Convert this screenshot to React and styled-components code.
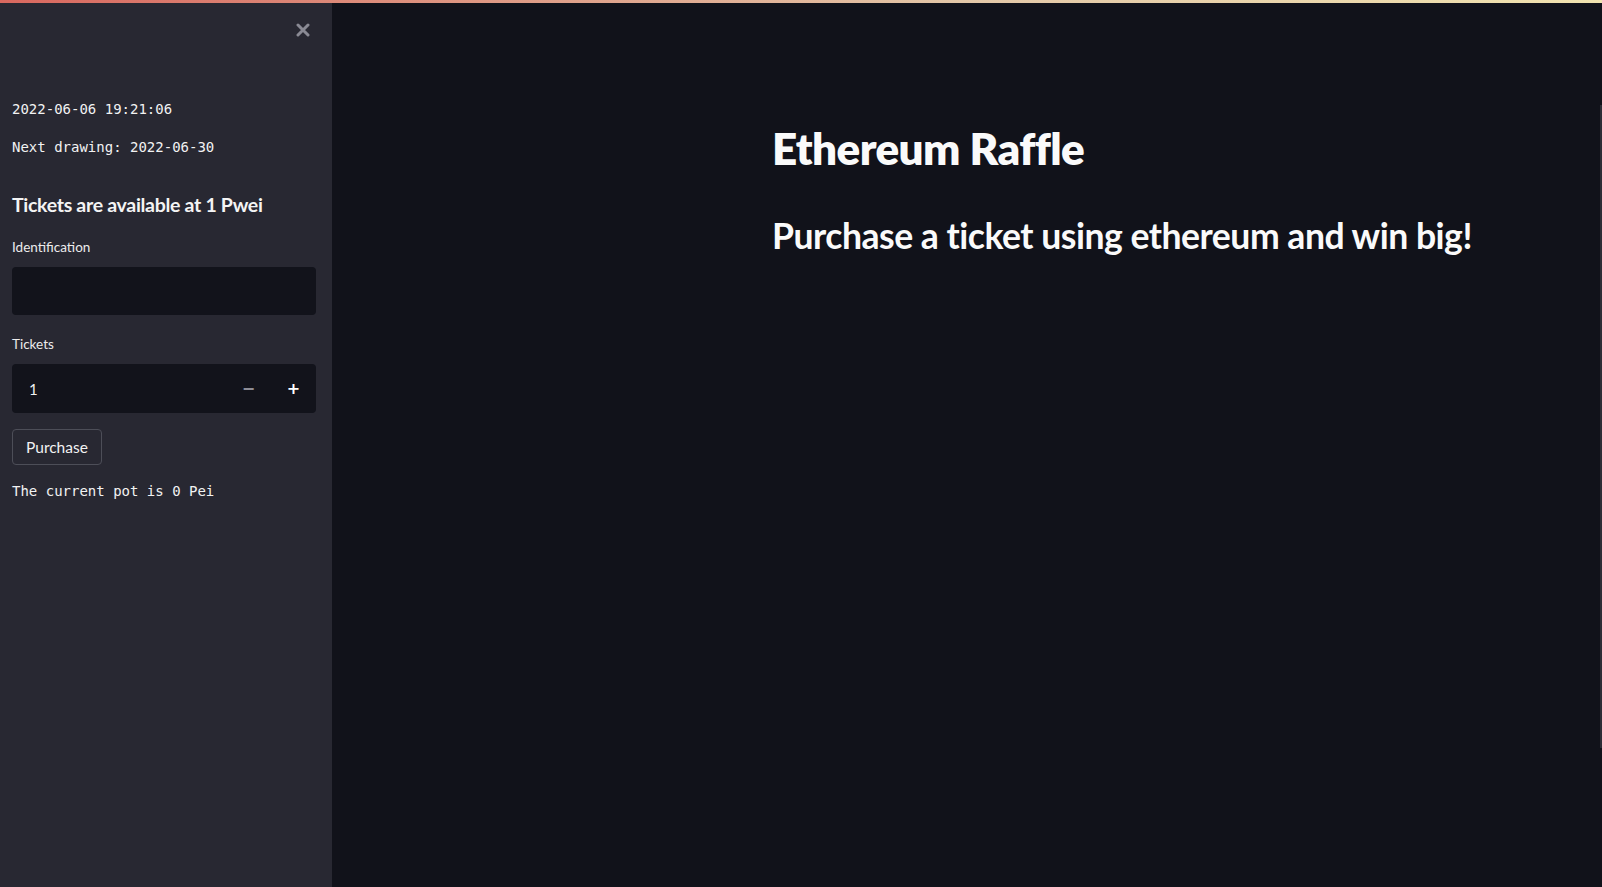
import styled, { createGlobalStyle } from "styled-components"

const Global = createGlobalStyle`
  html, body {
    margin: 0;
    padding: 0;
    height: 100%;
    background: #11121a;
    overflow: hidden;
  }
  #root { height: 100%; }
  * { box-sizing: border-box; }
`

const App = () => {
  return (
    <>
      <Global />
      <Decoration />
      <Page>
        <Sidebar>
          <CloseBtn>
            <svg width="14" height="14" viewBox="0 0 14 14">
              <path d="M2 2 L12 12 M12 2 L2 12" stroke="#8a8a94" strokeWidth="3" strokeLinecap="round" />
            </svg>
          </CloseBtn>
          <SideBody>
            <Mono>2022-06-06 19:21:06</Mono>
            <Mono>Next drawing: 2022-06-30</Mono>
            <SideTitle>Tickets are available at 1 Pwei</SideTitle>
            <Field>
              <Label>Identification</Label>
              <TextInput />
            </Field>
            <Field>
              <Label>Tickets</Label>
              <NumberBox>
                <span>1</span>
                <Stepper>
                  <StepBtn $dim>−</StepBtn>
                  <StepBtn>+</StepBtn>
                </Stepper>
              </NumberBox>
            </Field>
            <Button>Purchase</Button>
            <Mono>The current pot is 0 Pei</Mono>
          </SideBody>
        </Sidebar>
        <Main>
          <Block>
            <H1>Ethereum Raffle</H1>
            <H2>Purchase a ticket using ethereum and win big!</H2>
          </Block>
        </Main>
      </Page>
      <Scroll />
    </>
  )
}

const Decoration = styled.div`
  position: fixed;
  top: 0;
  left: 0;
  right: 0;
  height: 3px;
  z-index: 5;
  background: linear-gradient(90deg, #d9685f, #e3c7a8 60%, #f1e3b0);
`
const Page = styled.div`
  display: flex;
  height: 100%;
`
const Sidebar = styled.div`
  width: 332px;
  flex-shrink: 0;
  background: #282832;
  height: 100%;
  position: relative;
`
const CloseBtn = styled.div`
  position: absolute;
  top: 23px;
  left: 296px;
  display: flex;
`
const SideBody = styled.div`
  padding: 98px 16px 0 12px;
  display: flex;
  flex-direction: column;
  align-items: flex-start;
`
const Mono = styled.div`
  font-family: "DejaVu Sans Mono", "Liberation Mono", monospace;
  font-size: 14px;
  color: #f2f2f2;
  line-height: 22px;
  margin-bottom: 16px;
`
const SideTitle = styled.div`
  font-family: "Lato", "Noto Sans", sans-serif;
  font-weight: 700;
  font-size: 19.5px;
  color: #f4f4f4;
  margin-top: 18px;
  line-height: 26px;
  letter-spacing: -0.3px;
`
const Field = styled.div`
  width: 100%;
  margin-top: 19px;
`
const Label = styled.div`
  font-family: "Lato", "Noto Sans", sans-serif;
  font-size: 13.5px;
  color: #ececec;
  line-height: 20px;
  margin-bottom: 10px;
`
const TextInput = styled.div`
  width: 304px;
  height: 48px;
  background: #12131b;
  border-radius: 4px;
`
const NumberBox = styled.div`
  width: 304px;
  height: 49px;
  background: #12131b;
  border-radius: 4px;
  display: flex;
  align-items: center;
  justify-content: space-between;
  padding-left: 17px;
  font-family: "Lato", "Noto Sans", sans-serif;
  font-size: 15px;
  color: #f0f0f0;
`
const Stepper = styled.div`
  display: flex;
  height: 100%;
`
const StepBtn = styled.div`
  width: 45px;
  display: flex;
  align-items: center;
  justify-content: center;
  font-family: "DejaVu Sans", sans-serif;
  font-size: 16px;
  font-weight: 700;
  color: ${(p) => (p.$dim ? "#8d8d96" : "#ffffff")};
`
const Button = styled.div`
  margin-top: 16px;
  height: 36px;
  padding: 0 13px;
  display: flex;
  align-items: center;
  border: 1px solid #4d4e58;
  border-radius: 4px;
  font-family: "Lato", "Noto Sans", sans-serif;
  font-size: 15.5px;
  color: #f2f2f2;
  margin-bottom: 15px;
`
const Main = styled.div`
  flex: 1;
  padding: 123px 0 0 440px;
`
const Block = styled.div`
  display: flex;
  flex-direction: column;
`
const H1 = styled.h1`
  margin: 0;
  font-family: "Lato", "Noto Sans", sans-serif;
  font-weight: 800;
  font-size: 44px;
  line-height: 50px;
  color: #fafafa;
  letter-spacing: -0.6px;
`
const H2 = styled.h2`
  margin: 41px 0 0;
  font-family: "Lato", "Noto Sans", sans-serif;
  font-weight: 700;
  font-size: 35.6px;
  line-height: 44px;
  color: #fafafa;
  letter-spacing: -0.5px;
`
const Scroll = styled.div`
  position: fixed;
  right: 0;
  top: 105px;
  width: 2px;
  height: 643px;
  background: #2c2d36;
`

export default App
